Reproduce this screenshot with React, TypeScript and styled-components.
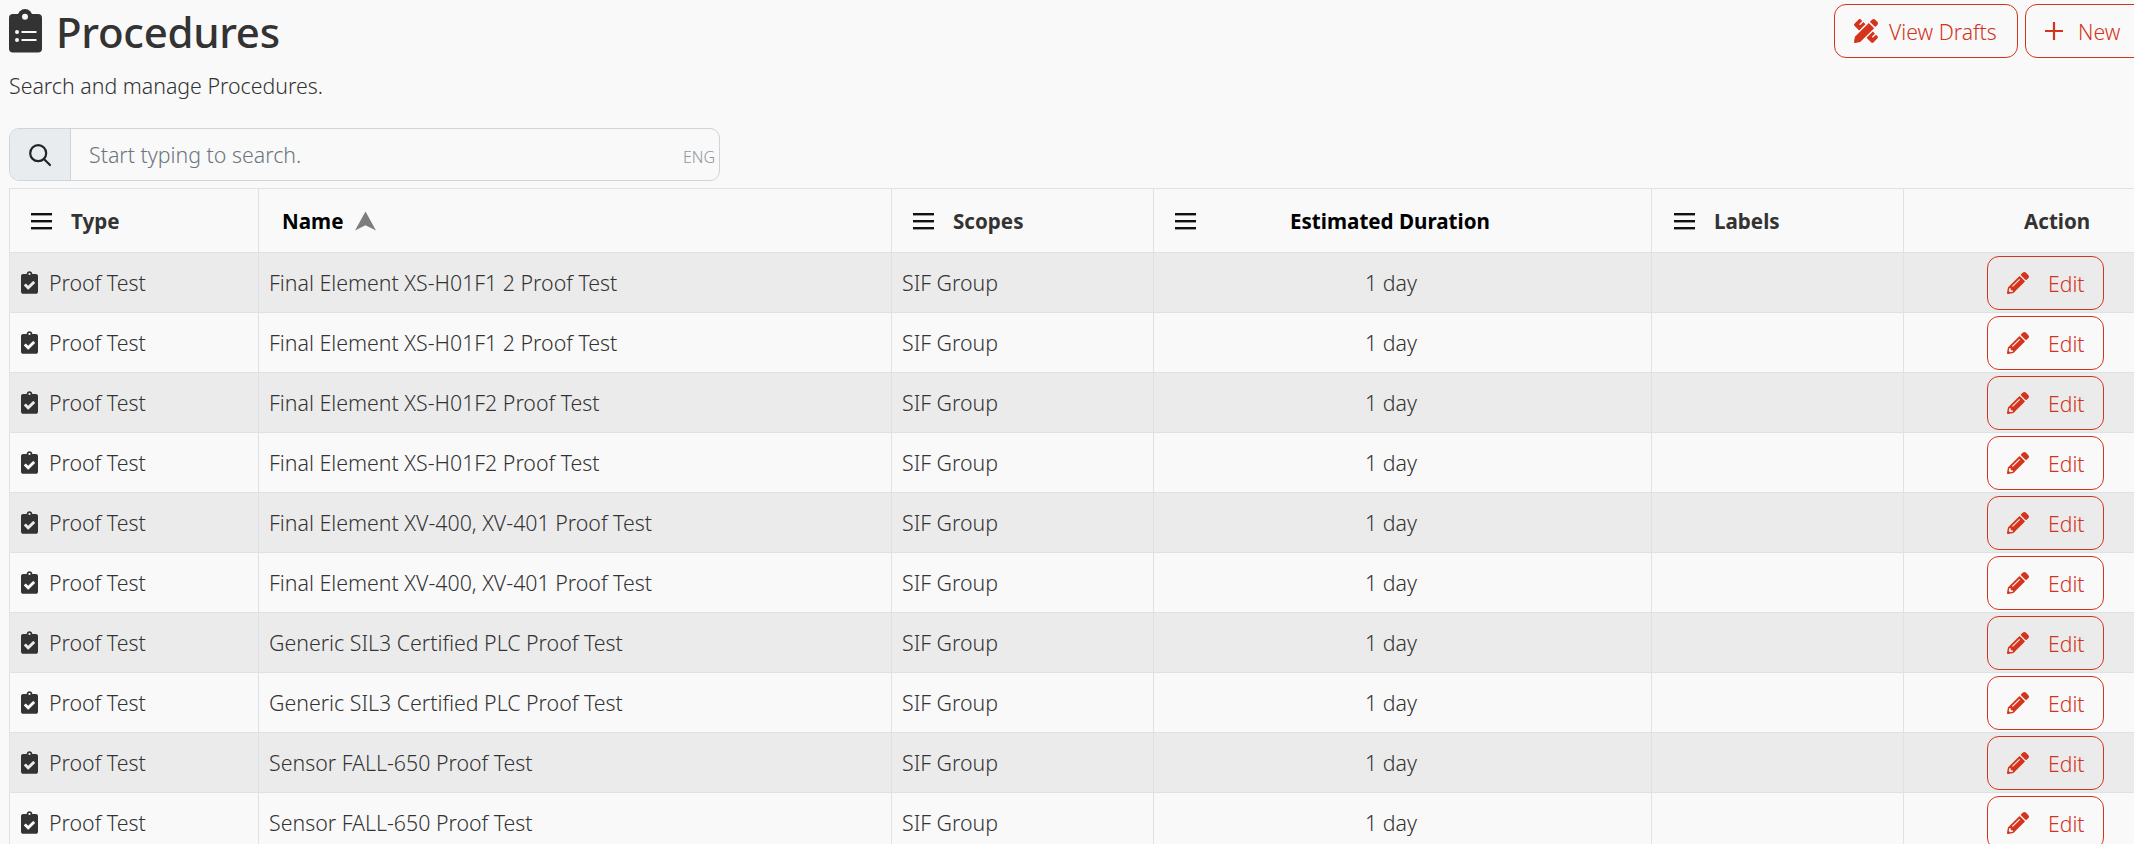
import React from "react";
import styled, { createGlobalStyle } from "styled-components";
import { FaClipboardCheck, FaPencilAlt, FaPencilRuler } from "react-icons/fa";

const Global = createGlobalStyle`
  html, body { margin: 0; padding: 0; background: #f9f9f9; overflow: hidden; height: 844px; }
  * { box-sizing: border-box; }
  body { font-family: "Noto Sans", "Liberation Sans", sans-serif; color: #3a3a3a; }
`;
const Page = styled.div`width: 2150px; padding-left: 9px;`;
const Top = styled.header`display: flex; justify-content: space-between; height: 66px;`;
const TitleRow = styled.h1`
  display: flex; align-items: center; gap: 14px; margin: 9px 0 0; height: 44px;
  font-size: 42px; font-weight: 500; color: #333; letter-spacing: -0.3px;
`;
const Actions = styled.div`display: flex; gap: 7px; padding-top: 4px; align-items: flex-start;`;
const Btn = styled.button<{ $w: number; $gap: number; $pad: number }>`
  display: flex; align-items: center; gap: ${p => p.$gap}px;
  width: ${p => p.$w}px; height: 54px; padding: 0 0 0 ${p => p.$pad}px;
  border: 1.33px solid #d4341b; border-radius: 12px; background: transparent;
  color: #d4341b; font-family: inherit; font-size: 21.2px; font-weight: 300; white-space: nowrap;
`;
const Sub = styled.p`margin: 0; height: 61px; font-size: 21.33px; font-weight: 300; line-height: 40px; color: #333;`;
const Search = styled.div`
  position: relative; display: flex; width: 711px; height: 53px; margin-top: 1px;
  border: 1.33px solid #ced4da; border-radius: 10px; overflow: hidden;
`;
const Addon = styled.div`
  display: flex; align-items: center; justify-content: center; width: 61px;
  background: #e9ecef; border-right: 1.33px solid #ced4da; color: #212529;
`;
const Input = styled.input`
  flex: 1; border: 0; outline: 0; background: transparent; padding: 0 18px;
  font-family: inherit; font-size: 21.33px; font-weight: 300; color: #333;
  &::placeholder { color: #6c757d; opacity: 1; }
`;
const Lang = styled.span`position: absolute; right: 4px; top: 17px; font-size: 16px; font-weight: 300; color: #8f969c;`;
const Table = styled.table`
  margin-top: 7px; border-collapse: collapse; table-layout: fixed; width: 2141px;
`;
const Th = styled.th<{ $black?: boolean; $w: number }>`
  width: ${p => p.$w}px; height: 64px; padding: 0; text-align: left;
  border: 1px solid #dee2e6; font-size: 20.6px; font-weight: 700;
  color: ${p => (p.$black ? "#000" : "#333")};
`;
const HeadInner = styled.div<{ $pad: number; $gap: number }>`
  display: flex; align-items: center; gap: ${p => p.$gap}px; padding-left: ${p => p.$pad}px;
`;
const Tr = styled.tr<{ $odd: boolean }>`background: ${p => (p.$odd ? "#ebebeb" : "#f9f9f9")};`;
const Td = styled.td<{ $pad?: number }>`
  height: 60px; padding: 0 0 0 ${p => p.$pad ?? 10}px; border: 1px solid #dee2e6;
  font-size: 21.33px; font-weight: 300; color: #333; vertical-align: middle; white-space: nowrap;
`;
const TypeCell = styled.div`display: flex; align-items: center; gap: 11px;`;
const CheckIcon = styled(FaClipboardCheck)`width: 17px; height: 23px; color: #333; flex: none;`;
const RowBtnWrap = styled.div`display: flex; height: 59px; padding-top: 3px;`;

function TitleIcon() {
  return (
    <svg width="33" height="44" viewBox="0 0 33 44">
      <rect x="0" y="5" width="33" height="38.5" rx="4" fill="#333" />
      <circle cx="16" cy="7.3" r="7.3" fill="#333" />
      <circle cx="16" cy="7.8" r="3" fill="#f9f9f9" />
      <circle cx="8" cy="23" r="2" fill="#f9f9f9" />
      <circle cx="8" cy="31" r="2" fill="#f9f9f9" />
      <rect x="12.5" y="22" width="15" height="2" fill="#f9f9f9" />
      <rect x="12.5" y="30" width="15" height="2" fill="#f9f9f9" />
    </svg>
  );
}
function Burger() {
  return (
    <svg width="21" height="18" viewBox="0 0 21 18" fill="#111">
      <rect x="0" y="1" width="21" height="2.4" />
      <rect x="0" y="8" width="21" height="2.4" />
      <rect x="0" y="15" width="21" height="2.4" />
    </svg>
  );
}
function SortUp() {
  return (
    <svg width="21" height="20" viewBox="0 0 22 20" fill="#7d7d7d">
      <path d="M11 0 L22 20 L11 14.5 L0 20 Z" />
    </svg>
  );
}
function SearchGlyph() {
  return (
    <svg width="24" height="24" viewBox="0 0 24 24" fill="none" stroke="#212529" strokeWidth="2.2" strokeLinecap="round">
      <circle cx="10.2" cy="10.2" r="8" />
      <path d="M16.2 16.2 L22 22" />
    </svg>
  );
}
function PlusGlyph() {
  return (
    <svg width="18" height="18" viewBox="0 0 18 18" stroke="#d4341b" strokeWidth="2.2">
      <path d="M9 0 V18 M0 9 H18" />
    </svg>
  );
}

const names = [
  "Final Element XS-H01F1 2 Proof Test",
  "Final Element XS-H01F1 2 Proof Test",
  "Final Element XS-H01F2 Proof Test",
  "Final Element XS-H01F2 Proof Test",
  "Final Element XV-400, XV-401 Proof Test",
  "Final Element XV-400, XV-401 Proof Test",
  "Generic SIL3 Certified PLC Proof Test",
  "Generic SIL3 Certified PLC Proof Test",
  "Sensor FALL-650 Proof Test",
  "Sensor FALL-650 Proof Test",
];

export default function App() {
  return (
    <Page>
      <Global />
      <Top>
        <TitleRow>
          <TitleIcon />
          Procedures
        </TitleRow>
        <Actions>
          <Btn $w={184} $gap={11} $pad={19}>
            <FaPencilRuler size={24} />
            View Drafts
          </Btn>
          <Btn $w={125} $gap={15} $pad={19}>
            <PlusGlyph />
            New
          </Btn>
        </Actions>
      </Top>
      <Sub>Search and manage Procedures.</Sub>
      <Search>
        <Addon><SearchGlyph /></Addon>
        <Input placeholder="Start typing to search." />
        <Lang>ENG</Lang>
      </Search>
      <Table>
        <thead>
          <tr>
            <Th $w={249}><HeadInner $pad={21} $gap={19}><Burger />Type</HeadInner></Th>
            <Th $w={633} $black><HeadInner $pad={23} $gap={12}>Name<SortUp /></HeadInner></Th>
            <Th $w={262}><HeadInner $pad={21} $gap={19}><Burger />Scopes</HeadInner></Th>
            <Th $w={498} $black><HeadInner $pad={21} $gap={94}><Burger />Estimated Duration</HeadInner></Th>
            <Th $w={252}><HeadInner $pad={22} $gap={19}><Burger />Labels</HeadInner></Th>
            <Th $w={247}><HeadInner $pad={120} $gap={0}>Action</HeadInner></Th>
          </tr>
        </thead>
        <tbody>
          {names.map((n, i) => (
            <Tr key={i} $odd={i % 2 === 0}>
              <Td $pad={11}><TypeCell><CheckIcon />Proof Test</TypeCell></Td>
              <Td>{n}</Td>
              <Td>SIF Group</Td>
              <Td $pad={211}>1 day</Td>
              <Td />
              <Td $pad={83}>
                <RowBtnWrap>
                  <Btn $w={117} $gap={19} $pad={19}>
                    <FaPencilAlt size={22} />
                    Edit
                  </Btn>
                </RowBtnWrap>
              </Td>
            </Tr>
          ))}
        </tbody>
      </Table>
    </Page>
  );
}
